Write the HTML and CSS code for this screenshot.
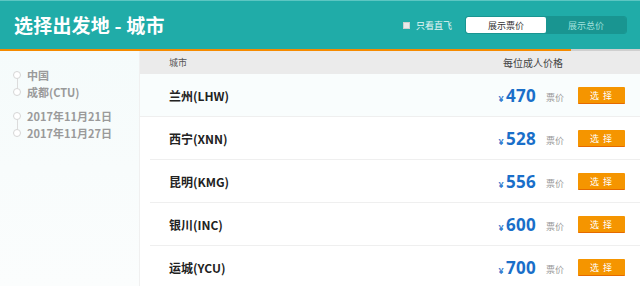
FILE: index.html
```html
<!DOCTYPE html>
<html lang="zh">
<head>
<meta charset="utf-8">
<link rel="stylesheet" href="styles.css">
</head>
<body>
<div class="page">
  <header class="top">
    <h1 class="title">选择出发地 - 城市</h1>
    <div class="tools">
      <label class="direct"><span class="box"></span>只看直飞</label>
      <div class="toggle">
        <span class="opt active">展示票价</span>
        <span class="opt">展示总价</span>
      </div>
    </div>
  </header>
  <div class="progress"><div class="bar" style="width:571px"></div></div>
  <div class="body">
    <aside class="side">
      <ul class="trail">
        <li><i class="dot"></i>中国</li>
        <li><i class="dot"></i>成都(CTU)</li>
      </ul>
      <ul class="trail">
        <li><i class="dot"></i>2017年11月21日</li>
        <li><i class="dot"></i>2017年11月27日</li>
      </ul>
    </aside>
    <main class="list">
      <div class="head">
        <span class="h-city">城市</span>
        <span class="h-price">每位成人价格</span>
      </div>
      <div class="row first">
        <span class="city">兰州(LHW)</span>
        <span class="price"><small>¥</small>470</span>
        <span class="tag">票价</span>
        <button class="pick">选 择</button>
      </div>
      <div class="row">
        <span class="city">西宁(XNN)</span>
        <span class="price"><small>¥</small>528</span>
        <span class="tag">票价</span>
        <button class="pick">选 择</button>
      </div>
      <div class="row">
        <span class="city">昆明(KMG)</span>
        <span class="price"><small>¥</small>556</span>
        <span class="tag">票价</span>
        <button class="pick">选 择</button>
      </div>
      <div class="row">
        <span class="city">银川(INC)</span>
        <span class="price"><small>¥</small>600</span>
        <span class="tag">票价</span>
        <button class="pick">选 择</button>
      </div>
      <div class="row">
        <span class="city">运城(YCU)</span>
        <span class="price"><small>¥</small>700</span>
        <span class="tag">票价</span>
        <button class="pick">选 择</button>
      </div>
    </main>
  </div>
</div>
</body>
</html>
```

FILE: styles.css
```css
* { box-sizing: border-box; margin: 0; padding: 0; }
html, body { width: 640px; height: 286px; overflow: hidden; background: #fff; }
body { font-family: "Noto Sans CJK SC", "Noto Sans", sans-serif; color: #333; }
.page { width: 640px; height: 286px; display: flex; flex-direction: column; }

.top {
  height: 49px;
  flex: none;
  background: #20aca8;
  border-top: 1px solid #5cc6c2;
  display: flex;
  align-items: center;
  justify-content: space-between;
  padding: 0 13px 0 14px;
}
.title { font-size: 19px; font-weight: 700; color: #fff; letter-spacing: 0.2px; line-height: 1; margin-top: -1px; }
.tools { display: flex; align-items: center; }
.direct { display: flex; align-items: center; font-size: 9px; color: #e8f7f6; margin-right: 13px; }
.box { width: 7px; height: 7px; background: #e9e9e9; border: 1px solid #cfcfcf; margin-right: 6px; }
.toggle { display: flex; border: 1px solid #199591; border-radius: 3px; overflow: hidden; height: 18px; }
.opt { width: 80px; display: flex; align-items: center; justify-content: center; font-size: 9px; color: #9fe0dc; background: #199591; }
.opt.active { background: #fff; color: #333; border-radius: 2px; }

.progress { height: 2px; flex: none; background: #cfcfcf; }
.bar { height: 2px; background: #f58a00; }

.body { flex: 1; display: flex; min-height: 0; }
.side {
  width: 140px;
  background: linear-gradient(#f5fbfb, #fbfdfd);
  border-right: 1px solid #f0f0f0;
  padding-top: 15px;
}
.trail { list-style: none; margin-bottom: 6px; position: relative; }
.trail::before {
  content: ""; position: absolute; left: 17px; top: 9px; height: 17px; width: 1px; background: #dcdcdc;
}
.trail li {
  height: 17.5px; display: flex; align-items: center;
  font-size: 11px; font-weight: 700; color: #9a9a9a; padding-left: 13px;
}
.dot {
  width: 8px; height: 8px; border: 1px solid #d6d6d6; border-radius: 50%; background: #fff;
  margin-right: 6px; position: relative; z-index: 1;
}

.list { flex: 1; display: flex; flex-direction: column; }
.head {
  height: 23px; flex: none; background: #ebebeb; display: flex; align-items: center;
  font-size: 9px; color: #555; padding-left: 29px;
}
.h-city { flex: 1; }
.h-price { margin-right: 77px; font-size: 10px; color: #444; }
.row {
  height: 43px; flex: none; display: flex; align-items: center;
  margin-left: 10px; padding: 1px 0 0 19px; border-bottom: 1px solid #efefef;
}
.row.first { background: #f9fdfd; margin-left: 0; padding-left: 29px; }
.city { flex: 1; font-size: 12px; font-weight: 700; color: #222; }
.price { font-family: "Open Sans", "Noto Sans", sans-serif; font-weight: 700; font-size: 17px; color: #1a6fc9; letter-spacing: 0.3px; }
.price small { font-size: 9px; margin-right: 2px; color: #3a7fd0; }
.tag { font-size: 9px; color: #999; margin: 4px 0 0 10px; width: 32px; }
.pick {
  width: 47px; height: 17px; border: 0; border-bottom: 1px solid #e56a00;
  background: #f59500; color: #fff; font-family: inherit; font-size: 9px; letter-spacing: 1px;
  margin-right: 15px; border-radius: 1px;
}
```
